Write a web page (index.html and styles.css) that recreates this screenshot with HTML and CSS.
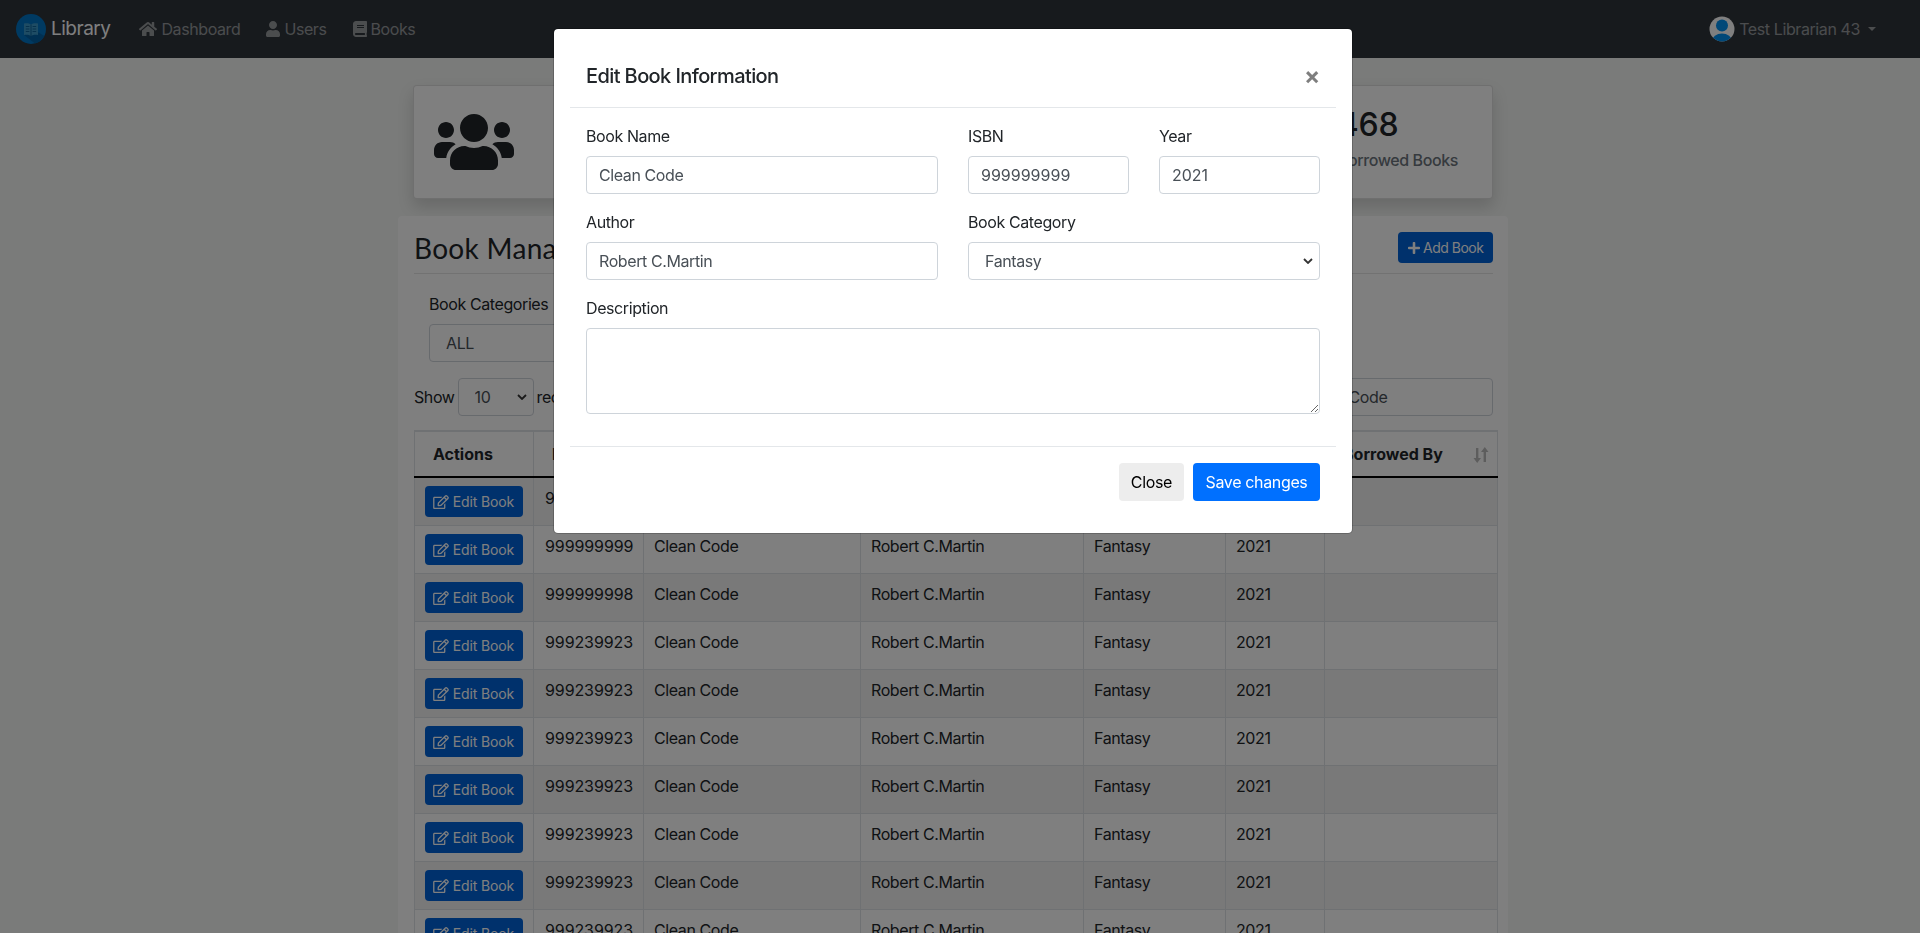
FILE: index.html
```html
<!DOCTYPE html>
<html lang="en">
<head>
    <meta charset="UTF-8">
    <title>Library - Books</title>
    <link rel="stylesheet" href="styles.css">
</head>
<body>
    <!-- top bar -->
    <nav class="navbar">
        <a class="brand">
            <svg class="brand-logo" viewBox="0 0 30 30">
                <circle cx="15" cy="15" r="15" fill="#0074c4"/>
                <path d="M8 10 L28.500 22 A15 15 0 0 1 19 29.500 L8 21 Z" fill="#0060a4"/>
                <path d="M8 9.500c2.500-.6 5-.4 7 1 2-1.400 4.500-1.600 7-1v11.500c-2.500-.6-5-.4-7 1-2-1.400-4.500-1.600-7-1z" fill="#3c98c8"/>
                <path d="M15 10.500v11.500M9.800 12.500h3.600M9.800 15h3.600M9.800 17.500h3.600M16.600 12.500h3.600M16.600 15h3.600M16.600 17.500h3.600" stroke="#0a5f94" stroke-width=".9" fill="none"/>
            </svg>
            Library
        </a>
        <a class="nav-link">
            <svg class="nav-icon" width="18" height="16" viewBox="0 0 576 512"><path d="M280.37 148.26L96 300.11V464a16 16 0 0 0 16 16l112.06-.29a16 16 0 0 0 15.92-16V368a16 16 0 0 1 16-16h64a16 16 0 0 1 16 16v95.64a16 16 0 0 0 16 16.05L464 480a16 16 0 0 0 16-16V300L295.67 148.26a12.19 12.19 0 0 0-15.3 0zM571.6 251.47L488 182.56V44.05a12 12 0 0 0-12-12h-56a12 12 0 0 0-12 12v72.61L318.47 43a48 48 0 0 0-61 0L4.34 251.47a12 12 0 0 0-1.6 16.9l25.5 31A12 12 0 0 0 45.15 301l235.22-193.74a12.19 12.19 0 0 1 15.3 0L530.9 301a12 12 0 0 0 16.9-1.6l25.5-31a12 12 0 0 0-1.7-16.93z"/></svg>
            Dashboard
        </a>
        <a class="nav-link">
            <svg class="nav-icon" width="14" height="16" viewBox="0 0 448 512"><path d="M224 256c70.700 0 128-57.300 128-128S294.700 0 224 0 96 57.300 96 128s57.300 128 128 128zm89.600 32h-16.700c-22.200 10.200-46.900 16-72.900 16s-50.600-5.800-72.900-16h-16.700C60.200 288 0 348.200 0 422.400V464c0 26.500 21.500 48 48 48h352c26.500 0 48-21.500 48-48v-41.600c0-74.200-60.200-134.400-134.400-134.400z"/></svg>
            Users
        </a>
        <a class="nav-link">
            <svg class="nav-icon" width="14" height="16" viewBox="0 0 448 512"><path d="M448 360V24c0-13.300-10.700-24-24-24H96C43 0 0 43 0 96v320c0 53 43 96 96 96h328c13.300 0 24-10.700 24-24v-16c0-7.500-3.500-14.300-8.900-18.700-4.200-15.400-4.200-59.300 0-74.700 5.400-4.300 8.900-11.100 8.900-18.600zM128 134c0-3.300 2.700-6 6-6h212c3.300 0 6 2.700 6 6v20c0 3.300-2.700 6-6 6H134c-3.300 0-6-2.700-6-6v-20zm0 64c0-3.300 2.700-6 6-6h212c3.300 0 6 2.700 6 6v20c0 3.300-2.700 6-6 6H134c-3.300 0-6-2.700-6-6v-20zm253.400 250H96c-17.700 0-32-14.300-32-32 0-17.600 14.400-32 32-32h285.400c-1.900 17.100-1.900 46.900 0 64z"/></svg>
            Books
        </a>
        <a class="nav-user">
            <svg class="avatar" viewBox="0 0 26 26">
                <clipPath id="avatar-clip"><circle cx="13" cy="13" r="12.500"/></clipPath>
                <g clip-path="url(#avatar-clip)">
                    <rect width="26" height="26" fill="#fff"/>
                    <circle cx="13" cy="9.500" r="6" fill="#0090f0"/>
                    <ellipse cx="13" cy="25" rx="10" ry="7.500" fill="#0090f0"/>
                </g>
            </svg>
            Test Librarian 43
            <span class="caret"></span>
        </a>
    </nav>

    <div class="container">
        <!-- stats -->
        <div class="stat-card">
            <svg class="stat-icon" width="80" height="64" viewBox="0 0 640 512"><path d="M96 224c35.300 0 64-28.700 64-64s-28.700-64-64-64-64 28.700-64 64 28.700 64 64 64zm448 0c35.300 0 64-28.700 64-64s-28.700-64-64-64-64 28.700-64 64 28.700 64 64 64zm32 32h-64c-17.600 0-33.500 7.100-45.100 18.600 40.300 22.100 68.900 62 75.100 109.400h66c17.700 0 32-14.300 32-32v-32c0-35.300-28.700-64-64-64zm-256 0c61.900 0 112-50.100 112-112S381.900 32 320 32 208 82.100 208 144s50.100 112 112 112zm76.800 32h-8.300c-20.800 10-43.900 16-68.500 16s-47.600-6-68.500-16h-8.300C179.600 288 128 339.600 128 403.200V432c0 26.500 21.500 48 48 48h288c26.500 0 48-21.500 48-48v-28.800c0-63.600-51.600-115.200-115.200-115.200zm-223.700-13.400C161.500 263.100 145.600 256 128 256H64c-35.300 0-64 28.700-64 64v32c0 17.700 14.300 32 32 32h65.900c6.300-47.400 34.900-87.300 75.200-109.400z"/></svg>
            <div class="stat-text">
                <div class="stat-number">468</div>
                <div class="stat-label">Borrowed Books</div>
            </div>
        </div>

        <!-- book management -->
        <div class="panel">
            <div class="panel-head">
                <h2>Book Management</h2>
                <button class="btn btn-primary btn-sm btn-add">
                    <svg class="btn-icon" width="12" height="14" viewBox="0 0 448 512"><path d="M416 208H272V64c0-17.670-14.330-32-32-32h-32c-17.670 0-32 14.330-32 32v144H32c-17.670 0-32 14.330-32 32v32c0 17.670 14.330 32 32 32h144v144c0 17.670 14.330 32 32 32h32c17.670 0 32-14.330 32-32V304h144c17.670 0 32-14.330 32-32v-32c0-17.670-14.330-32-32-32z"/></svg>
                    Add Book
                </button>
            </div>

            <div class="filter">
                <label>Book Categories</label>
                <select class="form-control"><option>ALL</option></select>
            </div>

            <div class="table-tools">
                <div class="length">Show <select class="form-control length-select"><option>10</option></select> records per page</div>
                <input class="form-control search" type="text" value="Clean Code">
            </div>

            <table class="book-table">
                <colgroup>
                    <col class="col-actions"><col class="col-isbn"><col class="col-name"><col class="col-author"><col class="col-cat"><col class="col-year"><col class="col-by">
                </colgroup>
                <thead>
                    <tr>
                        <th>Actions</th><th>ISBN</th><th>Book Name</th><th>Author</th><th>Book Category</th><th>Year</th>
                        <th class="th-sort">Borrowed By
                            <svg class="sort-icon" width="16" height="16" viewBox="0 0 16 16"><path d="M3 1h2.400v10H8l-3.800 5L.5 11H3zM10.600 15h2.400V5h2.500L11.800 0 8 5h2.600z"/></svg>
                        </th>
                    </tr>
                </thead>
                <tbody id="rows">
                    <tr><td><a class="btn btn-primary btn-sm btn-edit"><svg class="btn-icon" width="16" height="14" viewBox="0 0 576 512"><use href="#edit"/></svg> Edit Book</a></td><td>999999999</td><td>Clean Code</td><td>Robert C.Martin</td><td>Fantasy</td><td>2021</td><td></td></tr>
                    <tr><td><a class="btn btn-primary btn-sm btn-edit"><svg class="btn-icon" width="16" height="14" viewBox="0 0 576 512"><use href="#edit"/></svg> Edit Book</a></td><td>999999999</td><td>Clean Code</td><td>Robert C.Martin</td><td>Fantasy</td><td>2021</td><td></td></tr>
                    <tr><td><a class="btn btn-primary btn-sm btn-edit"><svg class="btn-icon" width="16" height="14" viewBox="0 0 576 512"><use href="#edit"/></svg> Edit Book</a></td><td>999999998</td><td>Clean Code</td><td>Robert C.Martin</td><td>Fantasy</td><td>2021</td><td></td></tr>
                    <tr><td><a class="btn btn-primary btn-sm btn-edit"><svg class="btn-icon" width="16" height="14" viewBox="0 0 576 512"><use href="#edit"/></svg> Edit Book</a></td><td>999239923</td><td>Clean Code</td><td>Robert C.Martin</td><td>Fantasy</td><td>2021</td><td></td></tr>
                    <tr><td><a class="btn btn-primary btn-sm btn-edit"><svg class="btn-icon" width="16" height="14" viewBox="0 0 576 512"><use href="#edit"/></svg> Edit Book</a></td><td>999239923</td><td>Clean Code</td><td>Robert C.Martin</td><td>Fantasy</td><td>2021</td><td></td></tr>
                    <tr><td><a class="btn btn-primary btn-sm btn-edit"><svg class="btn-icon" width="16" height="14" viewBox="0 0 576 512"><use href="#edit"/></svg> Edit Book</a></td><td>999239923</td><td>Clean Code</td><td>Robert C.Martin</td><td>Fantasy</td><td>2021</td><td></td></tr>
                    <tr><td><a class="btn btn-primary btn-sm btn-edit"><svg class="btn-icon" width="16" height="14" viewBox="0 0 576 512"><use href="#edit"/></svg> Edit Book</a></td><td>999239923</td><td>Clean Code</td><td>Robert C.Martin</td><td>Fantasy</td><td>2021</td><td></td></tr>
                    <tr><td><a class="btn btn-primary btn-sm btn-edit"><svg class="btn-icon" width="16" height="14" viewBox="0 0 576 512"><use href="#edit"/></svg> Edit Book</a></td><td>999239923</td><td>Clean Code</td><td>Robert C.Martin</td><td>Fantasy</td><td>2021</td><td></td></tr>
                    <tr><td><a class="btn btn-primary btn-sm btn-edit"><svg class="btn-icon" width="16" height="14" viewBox="0 0 576 512"><use href="#edit"/></svg> Edit Book</a></td><td>999239923</td><td>Clean Code</td><td>Robert C.Martin</td><td>Fantasy</td><td>2021</td><td></td></tr>
                    <tr><td><a class="btn btn-primary btn-sm btn-edit"><svg class="btn-icon" width="16" height="14" viewBox="0 0 576 512"><use href="#edit"/></svg> Edit Book</a></td><td>999239923</td><td>Clean Code</td><td>Robert C.Martin</td><td>Fantasy</td><td>2021</td><td></td></tr>
                </tbody>
            </table>
        </div>
    </div>

    <svg class="svg-defs" width="0" height="0"><defs><path id="edit" d="M402.300 344.900l32-32c5-5 13.700-1.500 13.700 5.700V464c0 26.500-21.500 48-48 48H48c-26.500 0-48-21.500-48-48V112c0-26.500 21.500-48 48-48h273.500c7.100 0 10.700 8.600 5.700 13.700l-32 32c-1.500 1.500-3.500 2.300-5.700 2.300H48v352h352V350.500c0-2.100.8-4.100 2.300-5.600zm156.600-201.800L296.300 405.700l-90.400 10c-26.200 2.900-48.500-19.200-45.600-45.600l10-90.400L432.900 17.100c22.900-22.900 59.900-22.900 82.700 0l43.200 43.200c22.900 22.900 22.900 60 .1 82.800zM460.100 174L402 115.900 216.200 301.800l-7.300 65.300 65.300-7.300L460.100 174zm64.800-79.700l-43.200-43.200c-4.100-4.100-10.800-4.100-14.800 0L436 82l58.100 58.100 30.900-30.900c4-4.200 4-10.800-.1-14.900z"/></defs></svg>

    <!-- edit modal -->
    <div class="backdrop"></div>
    <div class="modal">
        <div class="modal-header">
            <h5>Edit Book Information</h5>
            <span class="close">&times;</span>
        </div>
        <div class="modal-body">
            <div class="form-grid">
                <div class="form-group">
                    <label>Book Name</label>
                    <input class="form-control" type="text" value="Clean Code">
                </div>
                <div class="form-group">
                    <label>ISBN</label>
                    <input class="form-control num" type="text" value="999999999">
                </div>
                <div class="form-group">
                    <label>Year</label>
                    <input class="form-control num" type="text" value="2021">
                </div>
                <div class="form-group">
                    <label>Author</label>
                    <input class="form-control" type="text" value="Robert C.Martin">
                </div>
                <div class="form-group span-2">
                    <label>Book Category</label>
                    <select class="form-control"><option>Fantasy</option></select>
                </div>
                <div class="form-group span-3">
                    <label>Description</label>
                    <textarea class="form-control" rows="3"></textarea>
                </div>
            </div>
        </div>
        <div class="modal-footer">
            <button class="btn btn-light">Close</button>
            <button class="btn btn-save">Save changes</button>
        </div>
    </div>
</body>
</html>
```

FILE: styles.css
```css
* {
    box-sizing: border-box;
}

body {
    font-family: Inter, "Liberation Sans", sans-serif;
    font-size: 16px;
    line-height: 24px;
    letter-spacing: -0.4px;
    color: #212529;
    margin: 0;
    height: 933px;
    overflow: hidden;
    background: #f4f6f4;
    padding-right: 14px;
}

/* navbar */
.navbar {
    display: flex;
    align-items: center;
    height: 58px;
    margin-right: -14px;
    padding: 0 16px;
    background: #2e343a;
}

.brand {
    display: flex;
    align-items: center;
    gap: 5px;
    font-size: 19px;
    letter-spacing: -0.5px;
    color: #fff;
    margin-right: 29px;
}

.brand-logo {
    width: 30px;
    height: 30px;
}

.nav-link {
    display: flex;
    align-items: center;
    gap: 4px;
    color: rgba(255, 255, 255, 0.5);
    margin-right: 26px;
}

.nav-icon {
    fill: rgba(255, 255, 255, 0.5);
}

.nav-user {
    display: flex;
    align-items: center;
    gap: 4px;
    margin-left: auto;
    margin-right: 28px;
    color: rgba(255, 255, 255, 0.5);
}

.avatar {
    width: 26px;
    height: 26px;
}

.caret {
    width: 0;
    height: 0;
    margin-left: 4px;
    border-top: 4.800px solid rgba(255, 255, 255, 0.5);
    border-left: 4.800px solid transparent;
    border-right: 4.800px solid transparent;
}

/* page */
.container {
    width: 1110px;
    margin: 0 auto;
}

.stat-card {
    display: flex;
    align-items: center;
    justify-content: space-between;
    height: 114px;
    margin: 27px 15px 17px;
    padding: 0 34px 0 20px;
    background: #fff;
    border: 1px solid rgba(0, 0, 0, 0.125);
    border-radius: 4px;
    box-shadow: 0 8px 16px rgba(0, 0, 0, 0.15);
}

.stat-icon {
    fill: #212529;
}

.stat-text {
    padding-bottom: 7px;
}

.stat-number {
    font-size: 32px;
    line-height: 38px;
    font-weight: 500;
    letter-spacing: -0.2px;
}

.stat-label {
    color: #6c757d;
    font-weight: 500;
    margin-top: 4px;
}

.panel {
    padding: 16px 15px 16px 16px;
    background: #fff;
    border-radius: 4px;
    height: 760px;
}

.panel-head {
    display: flex;
    align-items: flex-start;
    justify-content: space-between;
    height: 42px;
    border-bottom: 1px solid rgba(0, 0, 0, 0.1);
}

h2 {
    font-family: Lato, "Open Sans", sans-serif;
    font-size: 28px;
    font-weight: 400;
    line-height: 32px;
    letter-spacing: 0.3px;
    margin: 0;
}

.filter {
    width: 300px;
    margin: 18px 0 16px 15px;
}

label {
    display: block;
    margin-bottom: 8px;
}

.form-control {
    display: block;
    width: 100%;
    height: 38px;
    padding: 6px 12px;
    font-family: inherit;
    font-size: 16px;
    line-height: 24px;
    letter-spacing: inherit;
    color: #495057;
    background: #fff;
    border: 1px solid #ced4da;
    border-radius: 4px;
}

.num {
    letter-spacing: 0;
}

select.form-control {
    appearance: none;
    padding-left: 16px;
    background: #fff url("data:image/svg+xml,%3Csvg xmlns='http://www.w3.org/2000/svg' width='10' height='6'%3E%3Cpath d='M1 1l4 4 4-4' fill='none' stroke='%23333' stroke-width='1.800'/%3E%3C/svg%3E") no-repeat right 6px center;
}

textarea.form-control {
    height: 86px;
    resize: vertical;
}

.table-tools {
    display: flex;
    align-items: center;
    justify-content: space-between;
    margin-bottom: 14px;
}

.length {
    display: flex;
    align-items: center;
    gap: 3px;
}

.length-select {
    width: 76px;
}

.search {
    width: 203px;
}

.book-table {
    width: 1083px;
    table-layout: fixed;
    border-collapse: collapse;
    border-top: 2px solid #dee2e6;
}

.col-actions { width: 119px; }
.col-isbn { width: 110px; }
.col-name { width: 217px; }
.col-author { width: 223px; }
.col-cat { width: 142px; }
.col-year { width: 99px; }
.col-by { width: 173px; }

.book-table th {
    position: relative;
    height: 46px;
    padding: 8px 18px;
    text-align: left;
    font-weight: 700;
    letter-spacing: 0;
    white-space: nowrap;
    border: 1px solid #dee2e6;
    border-bottom: 2px solid #000;
}

.book-table td {
    padding: 8px 10px;
    vertical-align: top;
    border: 1px solid #dee2e6;
}

.book-table td:nth-child(2) {
    padding-left: 11px;
    letter-spacing: -0.1px;
}

.book-table tbody tr:nth-child(odd) {
    background: rgba(0, 0, 0, 0.05);
}

.sort-icon {
    position: absolute;
    right: 8px;
    top: 15px;
    fill: #bbb;
}

/* buttons */
.btn {
    display: inline-block;
    height: 38px;
    padding: 7px 12px;
    font-family: inherit;
    font-size: 16px;
    line-height: 24px;
    letter-spacing: -0.35px;
    border: none;
    border-radius: 4px;
}

.btn-primary {
    color: #fff;
    background: #0062d8;
}

.btn-sm {
    height: 31px;
    padding: 4px 8px;
    font-size: 14px;
    line-height: 23px;
    letter-spacing: -0.15px;
    white-space: nowrap;
}

.btn-icon {
    fill: currentColor;
    vertical-align: -2px;
}

.btn-add {
    width: 95px;
    letter-spacing: -0.5px;
}

.btn-edit {
    display: block;
    width: 98px;
}

.btn-light {
    color: #000;
    background: #ededed;
}

.btn-save {
    width: 127px;
    padding: 7px 0;
    color: #fff;
    background: #0070ff;
}

/* modal */
.backdrop {
    position: fixed;
    inset: 0;
    background: rgba(0, 0, 0, 0.5);
}

.modal {
    position: fixed;
    top: 28px;
    left: 553px;
    width: 800px;
    padding: 16px;
    background: #fff;
    border-radius: 5px;
    border: 1px solid rgba(0, 0, 0, 0.2);
    background-clip: padding-box;
}

.modal-header {
    display: flex;
    align-items: center;
    justify-content: space-between;
    padding: 16px;
    border-bottom: 1px solid #e4e7ea;
}

h5 {
    font-size: 20px;
    font-weight: 500;
    line-height: 30px;
    letter-spacing: -0.6px;
    margin: 0;
}

.close {
    font-size: 24px;
    font-weight: 700;
    line-height: 24px;
    color: #000;
    opacity: 0.5;
}

.modal-body {
    padding: 16px 16px 0;
}

.form-grid {
    display: grid;
    grid-template-columns: 352px 161px 161px;
    column-gap: 30px;
}

.form-group {
    margin-bottom: 16px;
}

.span-2 {
    grid-column: span 2;
}

.span-3 {
    grid-column: span 3;
}

.modal-footer {
    display: flex;
    justify-content: flex-end;
    gap: 9px;
    margin-top: 16px;
    padding: 16px;
    border-top: 1px solid #e4e7ea;
}
```
